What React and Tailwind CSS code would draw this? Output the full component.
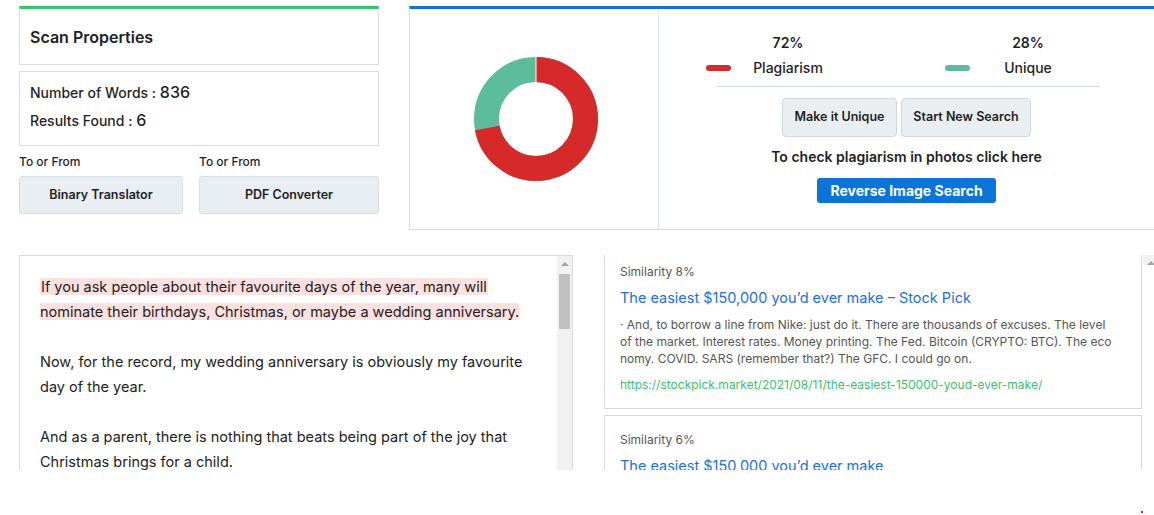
import { ChevronUp } from "lucide-react";

const font = { fontFamily: "Inter, 'Noto Sans', sans-serif" };

function ScrollBar({ thumb }) {
  return (
    <div className="flex w-[15px] shrink-0 flex-col items-center bg-[#f1f1f1]">
      <div className="mt-[6px] h-0 w-0 border-x-[4px] border-b-[4px] border-x-transparent border-b-[#a3a3a3]" />
      {thumb && <div className="mt-[8px] h-[55px] w-[11px] bg-[#c1c1c1]" />}
    </div>
  );
}

function Donut() {
  const r = 49.5;
  const c = 2 * Math.PI * r;
  return (
    <svg width="128" height="128" viewBox="0 0 128 128">
      <g transform="rotate(-90 64 64)">
        <circle cx="64" cy="64" r={r} fill="none" stroke="#5bbd9b" strokeWidth="25" />
        <circle
          cx="64"
          cy="64"
          r={r}
          fill="none"
          stroke="#d62a2a"
          strokeWidth="25"
          strokeDasharray={`${c * 0.72} ${c}`}
        />
      </g>
      <line x1="64" y1="2" x2="64" y2="27" stroke="#fff" strokeWidth="1" />
    </svg>
  );
}

function ResultCard({ similarity, title, body, url, className = "" }) {
  return (
    <div className={`border border-[#d9d9d9] px-[15px] ${className}`}>
      <p className="text-[12px] leading-[16px] text-[#555]">Similarity {similarity}</p>
      <p className="mt-[8px] text-[14.5px] leading-[20px] text-[#1a6fe3]">{title}</p>
      {body && (
        <p className="mt-[8px] whitespace-nowrap text-[12px] leading-[17px] text-[#555]">
          {body}
        </p>
      )}
      {url && (
        <p className="mt-[10px] text-[12px] leading-[16px] text-[#3cbf6c]">{url}</p>
      )}
    </div>
  );
}

export default function App() {
  return (
    <div className="relative h-[515px] w-[1154px] overflow-hidden bg-white text-[#1f1f1f]" style={font}>
      <div className="flex pt-[6px]">
        {/* scan properties */}
        <div className="ml-[19px] w-[360px]">
          <div className="flex h-[59px] items-center border border-t-[3px] border-[#dcdcdc] border-t-[#33c46e] px-[10px]">
            <h2 className="text-[16px] font-semibold text-[#222]">Scan Properties</h2>
          </div>
          <div className="mt-[6px] h-[75px] border border-[#dcdcdc] px-[10px] pt-[8px]">
            <p className="text-[14px] leading-[24px] font-medium">
              Number of Words : <span className="text-[16px]">836</span>
            </p>
            <p className="mt-[3px] text-[14px] leading-[24px] font-medium">
              Results Found : <span className="text-[16px]">6</span>
            </p>
          </div>
          <div className="mt-[8px] flex gap-[16px]">
            <div className="w-[164px]">
              <p className="text-[12px] leading-[16px] font-medium">To or From</p>
              <button className="mt-[6px] h-[38px] w-full rounded-[3px] border border-[#d6dde3] bg-[#e9eef3] text-[12.5px] font-semibold">
                Binary Translator
              </button>
            </div>
            <div className="flex-1">
              <p className="text-[12px] leading-[16px] font-medium">To or From</p>
              <button className="mt-[6px] h-[38px] w-full rounded-[3px] border border-[#d6dde3] bg-[#e9eef3] text-[12.5px] font-semibold">
                PDF Converter
              </button>
            </div>
          </div>
        </div>

        {/* summary panel */}
        <div className="ml-[30px] flex h-[224px] flex-1 border-b border-l border-t-[3px] border-[#d9d9d9] border-t-[#0a74da]">
          <div className="flex w-[249px] items-center justify-center border-r border-[#dde3ea] pl-[4px]">
            <Donut />
          </div>
          <div className="flex flex-1 flex-col">
            <div className="ml-[47px] mt-[25px] flex">
              <div className="flex items-end">
                <span className="mb-[6px] h-[6px] w-[25px] rounded-full bg-[#d62a2a]" />
                <div className="ml-[14px] w-[86px] text-center text-[14px] font-semibold">
                  <p className="leading-[18px]">72%</p>
                  <p className="mt-[7px] leading-[18px] font-medium">Plagiarism</p>
                </div>
              </div>
              <div className="ml-[114px] flex items-end">
                <span className="mb-[6px] h-[6px] w-[25px] rounded-full bg-[#5bbd9b]" />
                <div className="ml-[15px] w-[86px] text-center text-[14px] font-semibold">
                  <p className="leading-[18px]">28%</p>
                  <p className="mt-[7px] leading-[18px] font-medium">Unique</p>
                </div>
              </div>
            </div>
            <div className="ml-[58px] mt-[9px] h-px w-[383px] bg-[#cfd6de]" />
            <div className="mt-[11px] flex justify-center gap-[4px]">
              <button className="h-[39px] w-[115px] rounded-[4px] border border-[#cfd7df] bg-[#e9eef3] text-[12.5px] font-semibold">
                Make it Unique
              </button>
              <button className="h-[39px] w-[130px] rounded-[4px] border border-[#cfd7df] bg-[#e9eef3] text-[12.5px] font-semibold">
                Start New Search
              </button>
            </div>
            <p className="mt-[11px] text-center text-[14px] leading-[18px] font-semibold">
              To check plagiarism in photos click here
            </p>
            <div className="mt-[12px] flex justify-center">
              <button className="h-[25px] w-[179px] rounded-[3px] bg-[#0a74da] text-[14px] font-bold text-white">
                Reverse Image Search
              </button>
            </div>
          </div>
        </div>
      </div>

      {/* text and matched sources */}
      <div className="mt-[25px] flex">
        <div className="ml-[19px] flex h-[215px] w-[554px] shrink-0 overflow-hidden border-x border-t border-[#d9d9d9]">
          <div className="flex-1 pl-[20px] pt-[18px] text-[14.5px] leading-[25px] text-[#222]">
            <p>
              <span className="bg-[#fde0e0] px-[1px]">
                If you ask people about their favourite days of the year, many will
              </span>
              <br />
              <span className="bg-[#fde0e0]">
                nominate their birthdays, Christmas, or maybe a wedding anniversary.
              </span>
            </p>
            <p className="mt-[25px]">
              Now, for the record, my wedding anniversary is obviously my favourite
              <br />
              day of the year.
            </p>
            <p className="mt-[25px]">
              And as a parent, there is nothing that beats being part of the joy that
              <br />
              Christmas brings for a child.
            </p>
          </div>
          <ScrollBar thumb />
        </div>

        <div className="ml-[31px] flex h-[215px] flex-1 overflow-hidden">
          <div className="w-[538px] shrink-0">
            <ResultCard
              className="h-[154px] border-t-0 pt-[9px]"
              similarity="8%"
              title="The easiest $150,000 you’d ever make – Stock Pick"
              body={
                <>
                  {" "}· And, to borrow a line from Nike: just do it. There are thousands of excuses. The level
                  <br />
                  of the market. Interest rates. Money printing. The Fed. Bitcoin (CRYPTO: BTC). The eco
                  <br />
                  nomy. COVID. SARS (remember that?) The GFC. I could go on.
                </>
              }
              url="https://stockpick.market/2021/08/11/the-easiest-150000-youd-ever-make/"
            />
            <ResultCard
              className="mt-[6px] h-[80px] pt-[16px]"
              similarity="6%"
              title="The easiest $150,000 you’d ever make"
            />
          </div>
          <div className="ml-[1px]">
            <ScrollBar />
          </div>
        </div>
      </div>

      <span className="absolute bottom-[2px] left-[1141px] h-[2px] w-[2px] bg-[#e02020]" />
    </div>
  );
}
